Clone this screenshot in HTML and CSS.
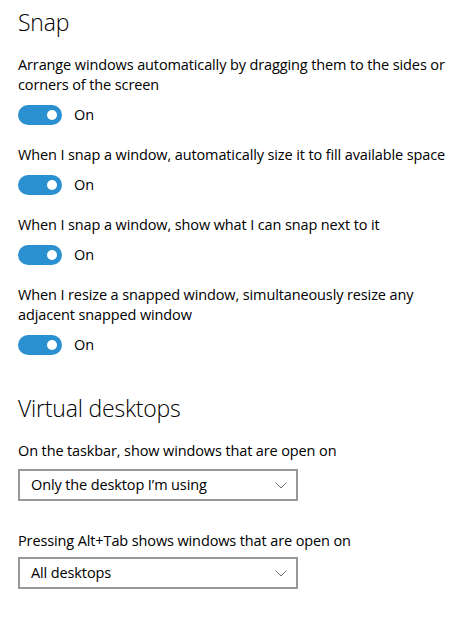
FILE: index.html
```html
<!DOCTYPE html>
<html lang="en">
<head>
<meta charset="utf-8">
<title>Multitasking</title>
<link rel="stylesheet" href="styles.css">
</head>
<body>
<main class="page">
  <section class="group">
    <h2 class="group-title group-title-first">Snap</h2>
    <div class="setting">
      <p class="setting-label">Arrange windows automatically by dragging them to the sides or corners of the screen</p>
      <div class="toggle-row"><span class="toggle"><span class="thumb"></span></span><span class="toggle-state">On</span></div>
    </div>
    <div class="setting">
      <p class="setting-label">When I snap a window, automatically size it to fill available space</p>
      <div class="toggle-row"><span class="toggle"><span class="thumb"></span></span><span class="toggle-state">On</span></div>
    </div>
    <div class="setting">
      <p class="setting-label">When I snap a window, show what I can snap next to it</p>
      <div class="toggle-row"><span class="toggle"><span class="thumb"></span></span><span class="toggle-state">On</span></div>
    </div>
    <div class="setting">
      <p class="setting-label">When I resize a snapped window, simultaneously resize any adjacent snapped window</p>
      <div class="toggle-row"><span class="toggle"><span class="thumb"></span></span><span class="toggle-state">On</span></div>
    </div>
  </section>
  <section class="group">
    <h2 class="group-title group-title-second">Virtual desktops</h2>
    <div class="setting setting-select first-select">
      <p class="setting-label">On the taskbar, show windows that are open on</p>
      <div class="select"><span class="select-value">Only the desktop I’m using</span><svg class="chevron" width="12" height="7" viewBox="0 0 12 7"><polyline points="0.5,0.5 6,6 11.5,0.5" fill="none" stroke="#6d6d6d" stroke-width="1"/></svg></div>
    </div>
    <div class="setting setting-select">
      <p class="setting-label">Pressing Alt+Tab shows windows that are open on</p>
      <div class="select"><span class="select-value">All desktops</span><svg class="chevron" width="12" height="7" viewBox="0 0 12 7"><polyline points="0.5,0.5 6,6 11.5,0.5" fill="none" stroke="#6d6d6d" stroke-width="1"/></svg></div>
    </div>
  </section>
</main>
</body>
</html>
```

FILE: styles.css
```css
html, body {
  margin: 0;
  padding: 0;
  background: #ffffff;
}

body {
  font-family: "Open Sans", "Noto Sans", "DejaVu Sans", sans-serif;
  color: #000000;
  font-size: 14.5px;
  letter-spacing: -0.12px;
}

.page {
  padding: 6px 18px 0 18px;
  width: 430px;
}

.group-title {
  margin: 0;
  font-size: 23px;
  line-height: 32px;
  font-weight: 300;
  letter-spacing: -0.2px;
}

.group-title-second {
  margin-top: 37px;
}

.setting {
  margin-top: 20px;
}

.group-title-first + .setting {
  margin-top: 17px;
}

.setting-label {
  margin: 0;
  line-height: 20px;
}

.toggle-row {
  display: flex;
  align-items: center;
  margin-top: 10px;
  height: 20px;
}

.toggle {
  display: flex;
  align-items: center;
  justify-content: flex-end;
  width: 44px;
  height: 20px;
  border-radius: 10px;
  background: #2b90d0;
  padding-right: 5px;
  box-sizing: border-box;
}

.thumb {
  width: 10px;
  height: 10px;
  border-radius: 50%;
  background: #ffffff;
}

.toggle-state {
  margin-left: 12px;
  line-height: 20px;
}

.group-title-second + .setting {
  margin-top: 17px;
}

.setting-select + .setting-select {
  margin-top: 30px;
}

.select {
  display: flex;
  align-items: center;
  justify-content: space-between;
  box-sizing: border-box;
  width: 280px;
  height: 32px;
  border: 2px solid #999999;
  padding: 0 9px 0 11px;
  margin-top: 8px;
}

.setting-select + .setting-select .select {
  margin-top: 6px;
}

.select-value {
  line-height: 20px;
}

.chevron {
  display: block;
}
```
